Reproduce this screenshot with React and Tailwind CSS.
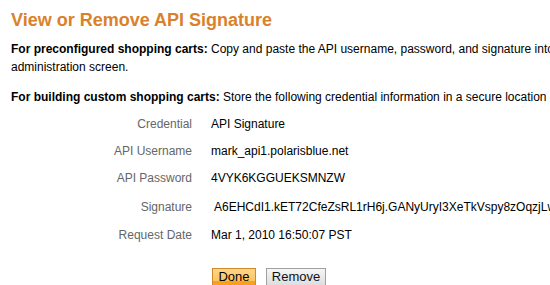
export default function App() {
  const rows = [
    ["Credential", "API Signature", "h-[27px]"],
    ["API Username", "mark_api1.polarisblue.net", "h-[27px]"],
    ["API Password", "4VYK6KGGUEKSMNZW", "h-[28px]"],
    ["Signature", "A6EHCdI1.kET72CfeZsRL1rH6j.GANyUryI3XeTkVspy8zOqzjLw", "h-[29px]"],
    ["Request Date", "Mar 1, 2010 16:50:07 PST", "h-[28px]"],
  ];
  return (
    <div className="w-[550px] h-[285px] overflow-hidden bg-white font-['Liberation_Sans',Arial,sans-serif] text-[12px] text-black whitespace-nowrap">
      <div className="pl-[11px] pt-[10px]">
        <h1 className="text-[18px] font-bold text-[#d9822b] leading-[20px]">View or Remove API Signature</h1>
        <p className="mt-[10px] leading-[18px]">
          <b>For preconfigured shopping carts:</b> Copy and paste the API username, password, and signature into your shopping cart's
          <br />administration screen.
        </p>
        <p className="mt-[12px] leading-[18px]">
          <b>For building custom shopping carts:</b> Store the following credential information in a secure location on your server.
        </p>
      </div>
      <div className="mt-[4px] flex flex-col">
        {rows.map(([l, v, h]) => (
          <div key={l} className={`flex items-center ${h}`}>
            <div className="w-[192px] shrink-0 text-right text-[#666666]">{l}</div>
            <div className={l === "Signature" ? "shrink-0 pl-[22px]" : "shrink-0 pl-[19px]"}>{v}</div>
          </div>
        ))}
      </div>
      <div className="mt-[19px] flex items-start gap-[10px] pl-[212px]">
        <button className="h-[22px] w-[44px] border border-[#d08a2a] bg-[linear-gradient(#ffd58a_0%,#ffc45e_60%,#f7a11e_60%,#f7a11e_100%)] pb-[4px] text-[13px] leading-[16px] text-black">Done</button>
        <button className="h-[22px] w-[60px] border border-[#a0a0a0] bg-[linear-gradient(#f6f6f6_0%,#e4e4e4_60%,#d8d8d8_100%)] pb-[4px] text-[13px] leading-[16px] text-[#111]">Remove</button>
      </div>
    </div>
  );
}
